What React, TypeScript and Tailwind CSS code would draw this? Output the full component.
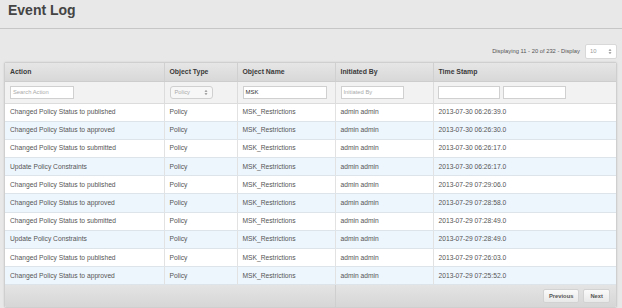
import React from 'react';

const ROWS: [string, string][] = [
  ['Changed Policy Status to published', '2013-07-30 06:26:39.0'],
  ['Changed Policy Status to approved', '2013-07-30 06:26:30.0'],
  ['Changed Policy Status to submitted', '2013-07-30 06:26:17.0'],
  ['Update Policy Constraints', '2013-07-30 06:26:17.0'],
  ['Changed Policy Status to published', '2013-07-29 07:29:06.0'],
  ['Changed Policy Status to approved', '2013-07-29 07:28:58.0'],
  ['Changed Policy Status to submitted', '2013-07-29 07:28:49.0'],
  ['Update Policy Constraints', '2013-07-29 07:28:49.0'],
  ['Changed Policy Status to published', '2013-07-29 07:26:03.0'],
  ['Changed Policy Status to approved', '2013-07-29 07:25:52.0'],
];

function Arrows() {
  return (
    <svg width="4" height="7" viewBox="0 0 4 7" className="shrink-0">
      <path d="M0.5 2.8 L2 1 L3.5 2.8 Z" fill="#8a8a8a" />
      <path d="M0.5 4.2 L2 6 L3.5 4.2 Z" fill="#8a8a8a" />
    </svg>
  );
}

export default function App() {
  return (
    <div
      className="w-[622px] h-[308px] bg-[#e8e8e8] overflow-hidden text-[#333]"
      style={{ fontFamily: '"Liberation Sans", Arial, sans-serif' }}
    >
      {/* Title bar */}
      <div className="h-[29px] border-b border-[#c6c6c6] px-[8px] pt-[1px]">
        <h1 className="text-[14px] font-bold text-[#444] leading-[18px]">Event Log</h1>
      </div>

      {/* Display count */}
      <div className="flex items-center justify-end gap-[5px] pr-[5px] pt-[14px] h-[30px]">
        <span className="text-[5.8px] text-[#555]">Displaying 11 - 20 of 232 - Display</span>
        <div className="w-[32px] h-[15px] bg-white border border-[#d8d8d8] rounded-[2px] flex items-center justify-between px-[4px]">
          <span className="text-[5.8px] text-[#999]">10</span>
          <Arrows />
        </div>
      </div>

      {/* Table */}
      <div className="mx-[4px] mt-[3px] w-[613px] border border-[#cfcfcf] rounded-[2px] bg-white shadow-[0_0_2px_rgba(0,0,0,0.12)] overflow-hidden">
        <table className="w-full border-collapse text-[6.7px] table-fixed">
          <colgroup>
            <col className="w-[159px]" />
            <col className="w-[73px]" />
            <col className="w-[98px]" />
            <col className="w-[98px]" />
            <col />
          </colgroup>
          <thead>
            <tr className="h-[18px] bg-gradient-to-b from-[#e6e6e6] to-[#d8d8d8] text-left text-[#3a3a3a]">
              {['Action', 'Object Type', 'Object Name', 'Initiated By', 'Time Stamp'].map((h, i) => (
                <th
                  key={h}
                  className={`font-bold text-[6.9px] px-[5px] border-b border-[#cdcdcd] ${i > 0 ? 'border-l border-l-[#d0d0d0]' : ''}`}
                >
                  {h}
                </th>
              ))}
            </tr>
            <tr className="h-[22px] bg-[#f2f2f2]">
              <td className="px-[5px] border-b border-[#dcdcdc]">
                <div className="w-[64px] h-[13px] bg-white border border-[#d0d0d0] flex items-center px-[2px] text-[5.8px] text-[#aaa]">
                  Search Action
                </div>
              </td>
              <td className="px-[5px] border-b border-l border-[#dcdcdc]">
                <div className="w-[43px] h-[13px] bg-[#f7f7f7] border border-[#d0d0d0] rounded-[3px] flex items-center justify-between px-[4px] text-[5.8px] text-[#aaa]">
                  Policy
                  <Arrows />
                </div>
              </td>
              <td className="px-[5px] border-b border-l border-[#dcdcdc]">
                <div className="w-[84px] h-[13px] bg-white border border-[#d0d0d0] flex items-center px-[2px] text-[6px] text-[#333]">
                  MSK
                </div>
              </td>
              <td className="px-[5px] border-b border-l border-[#dcdcdc]">
                <div className="w-[63px] h-[13px] bg-white border border-[#d0d0d0] flex items-center px-[2px] text-[5.8px] text-[#aaa]">
                  Initiated By
                </div>
              </td>
              <td className="px-[4px] border-b border-l border-[#dcdcdc]">
                <div className="flex gap-[3px]">
                  <div className="w-[62px] h-[13px] bg-white border border-[#d0d0d0]" />
                  <div className="w-[63px] h-[13px] bg-white border border-[#d0d0d0]" />
                </div>
              </td>
            </tr>
          </thead>
          <tbody>
            {ROWS.map(([action, ts], i) => (
              <tr key={i} className={`h-[18.2px] ${i % 2 ? 'bg-[#eef6fd]' : 'bg-white'} text-[#555]`}>
                <td className="px-[5px] border-b border-[#dde4ea]">{action}</td>
                <td className="px-[5px] border-b border-l border-[#dde4ea] border-l-[#e2e2e2]">Policy</td>
                <td className="px-[5px] border-b border-l border-[#dde4ea] border-l-[#e2e2e2]">MSK_Restrictions</td>
                <td className="px-[5px] border-b border-l border-[#dde4ea] border-l-[#e2e2e2]">admin admin</td>
                <td className="px-[5px] border-b border-l border-[#dde4ea] border-l-[#e2e2e2]">{ts}</td>
              </tr>
            ))}
          </tbody>
          <tfoot>
            <tr className="h-[22px] bg-gradient-to-b from-[#e4e4e4] to-[#d6d6d6]">
              <td colSpan={3} />
              <td colSpan={2} className="border-l border-[#cfcfcf]">
                <div className="flex justify-end gap-[4px] pr-[6px]">
                  <button className="h-[14px] px-[5px] rounded-[2px] border border-[#d2d2d2] bg-gradient-to-b from-[#fafafa] to-[#e8e8e8] text-[5.8px] font-bold text-[#555]">
                    Previous
                  </button>
                  <button className="h-[14px] px-[6px] rounded-[2px] border border-[#d2d2d2] bg-gradient-to-b from-[#fafafa] to-[#e8e8e8] text-[5.8px] font-bold text-[#555]">
                    Next
                  </button>
                </div>
              </td>
            </tr>
          </tfoot>
        </table>
      </div>
    </div>
  );
}
